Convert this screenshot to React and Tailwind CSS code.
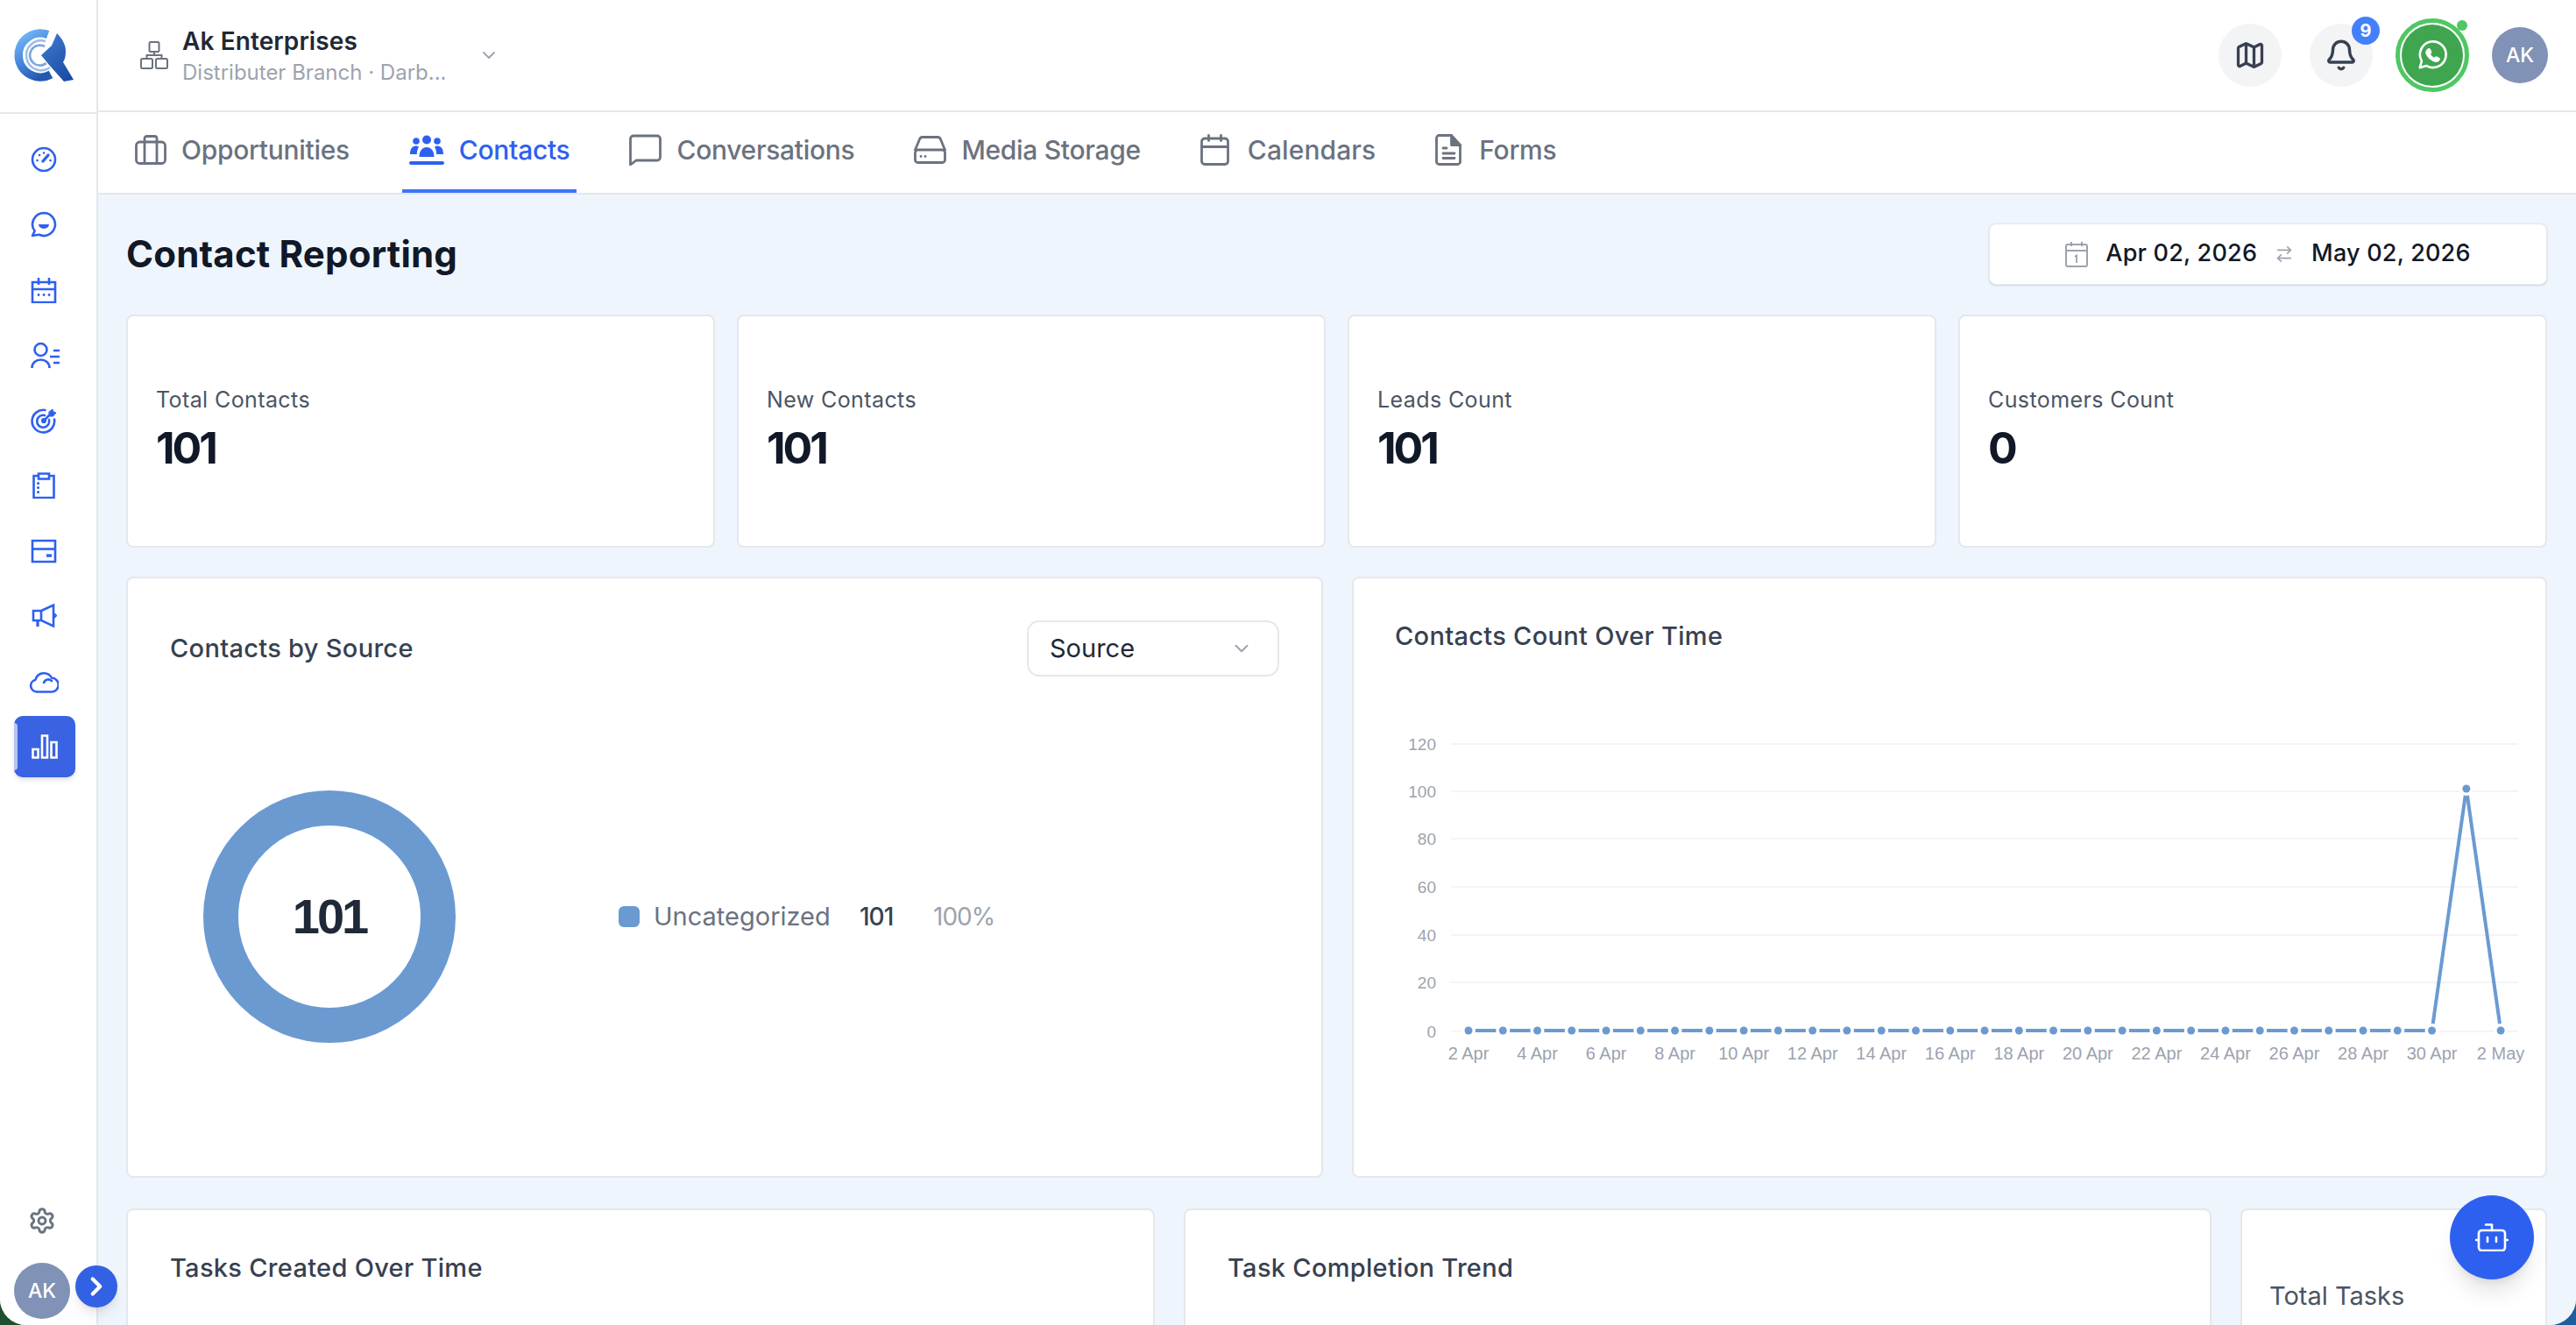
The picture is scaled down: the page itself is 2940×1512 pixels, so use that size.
import React from "react";
import { ChevronDown, ChevronRight, Map, Bell, Settings, ArrowRightLeft } from "lucide-react";

const font = "font-['Inter','Noto_Sans',sans-serif]";

function SideIcon({ children, box = "0 0 30 30", className = "w-[30px] h-[30px]" }) {
  return (
    <svg viewBox={box} className={className} fill="none" stroke="currentColor" strokeWidth="2.6" strokeLinecap="round" strokeLinejoin="round">
      {children}
    </svg>
  );
}

const sideIcons = [
  // gauge
  <SideIcon key="gauge">
    <circle cx="15" cy="15" r="13" />
    <path d="M14 17l6-7" strokeWidth="3.4" />
    <path d="M7.5 16h.1M10 10h.1M15 7.5h.1M22.5 16h.1" strokeWidth="2.6" />
  </SideIcon>,
  // chat
  <SideIcon key="chat">
    <path d="M15 2a13 13 0 1 1-5.5 24.8L2 28l2.6-5.4A13 13 0 0 1 15 2z" />
    <path d="M9 15h12a6 5 0 0 1-12 0z" fill="currentColor" stroke="none" />
  </SideIcon>,
  // calendar
  <SideIcon key="cal">
    <path d="M2 6h26v23H2z" strokeLinecap="butt" strokeLinejoin="miter" />
    <path d="M2 14h26M9 1v8M21 1v8" strokeLinecap="butt" />
    <path d="M9 20.5h.1M15 20.5h.1M21 20.5h.1" strokeWidth="2.8" />
  </SideIcon>,
  // person list
  <SideIcon key="person" box="0 0 33 31" className="w-[33px] h-[31px]">
    <circle cx="11.5" cy="9" r="7" />
    <path d="M1.5 30c0-6 4.5-9.5 10-9.5S21.5 24 21.5 30" strokeLinecap="butt" />
    <path d="M26 10h7M22 17h11M26 24h7" strokeLinecap="butt" />
  </SideIcon>,
  // target
  <SideIcon key="target">
    <path d="M16.5 3A12.8 12.8 0 1 0 27 13.5" />
    <path d="M16 9a7 7 0 1 0 5 5" />
    <circle cx="15" cy="15" r="1.8" fill="currentColor" />
    <path d="M15 15l7.5-7.5" />
    <path d="M21 5l4-3 1 3 3 1-3.5 4H22z" fill="currentColor" strokeWidth="1" />
  </SideIcon>,
  // clipboard
  <SideIcon key="clip">
    <path d="M9 4H3.5v25h23V4H21" strokeLinecap="butt" strokeLinejoin="miter" />
    <path d="M9 1.5h12v6H9z" strokeLinecap="butt" strokeLinejoin="miter" />
    <path d="M8.5 12.5h.1M8.5 17.5h.1M8.5 22.5h.1" strokeWidth="3" />
  </SideIcon>,
  // card
  <SideIcon key="card">
    <path d="M2 3h26v24H2z" strokeLinecap="butt" strokeLinejoin="miter" />
    <path d="M2 12.5h26" strokeLinecap="butt" />
    <path d="M18 20h6" strokeWidth="3.4" strokeLinecap="butt" />
  </SideIcon>,
  // megaphone
  <SideIcon key="mega">
    <path d="M3 9h9v11H3zM12 9l14-6.5v24L12 20z" strokeLinejoin="miter" />
    <path d="M27 12.5l2 2-2 2" strokeWidth="2.2" />
    <path d="M8 20v7" strokeWidth="3.2" strokeLinecap="butt" />
  </SideIcon>,
  // cloud
  <SideIcon key="cloud" box="0 0 34 30" className="w-[34px] h-[30px] -ml-[2px]">
    <path d="M9 27.5a7 7 0 0 1-1.5-13.8A10 10 0 0 1 26 11.5a8 8 0 0 1-.5 16z" />
    <path d="M17 17a5.5 5.5 0 0 1 9-2" />
  </SideIcon>,
];

function LogoMark() {
  return (
    <svg viewBox="0 0 84 80" className="w-[84px] h-[80px]" fill="none">
      <defs>
        <linearGradient id="logoRing" x1="0.2" y1="0" x2="0.7" y2="1">
          <stop offset="0" stopColor="#70b4f5" />
          <stop offset="0.5" stopColor="#4585dc" />
          <stop offset="1" stopColor="#2458b0" />
        </linearGradient>
        <linearGradient id="logoArrow" x1="0.2" y1="0" x2="0.8" y2="1">
          <stop offset="0" stopColor="#3d78cf" />
          <stop offset="1" stopColor="#1b4ba4" />
        </linearGradient>
      </defs>
      <path d="M44.6 15.5A25 25 0 1 0 48 61" stroke="url(#logoRing)" strokeWidth="9.5" />
      <path d="M42 23A17 17 0 1 0 47 53" stroke="#9dc0e8" strokeWidth="2.6" />
      <path d="M41 29A11.5 11.5 0 1 0 44 47" stroke="#7ea6da" strokeWidth="2.6" />
      <path d="M55 14C61 20 65 27 65 34C65 40 64 44 62 47L74 67L63 69L46 50L37 39L49 28Z" fill="url(#logoArrow)" stroke="#ffffff" strokeWidth="2.5" paintOrder="stroke" />
    </svg>
  );
}

function Tab({ icon, label, active, gap = "gap-[17px]", tracking = "tracking-[-0.3px]" }) {
  return (
    <div className={`flex items-center ${gap} h-full px-[8px] border-b-4 pb-[2px] ${active ? "border-[#3b76f6] text-[#2e60f0]" : "border-transparent text-[#6b7280]"}`}>
      {icon}
      <span className={`text-[30px] font-medium ${tracking}`}>{label}</span>
    </div>
  );
}

const tabIconCls = "fill-none stroke-current";

const tabs = [
  {
    label: "Opportunities",
    icon: (
      <svg viewBox="0 0 36 34" className={`w-[36px] h-[34px] ${tabIconCls}`} strokeWidth="2.8" strokeLinejoin="round">
        <rect x="1.5" y="8" width="33" height="24.5" rx="4" />
        <path d="M11 8V4a2.5 2.5 0 0 1 2.5-2.5h9A2.5 2.5 0 0 1 25 4v4M11 8v24.5M25 8v24.5" />
      </svg>
    ),
  },
  {
    label: "Contacts",
    active: true,
    icon: (
      <svg viewBox="0 0 40 36" className="w-[40px] h-[36px] fill-current">
        <circle cx="20" cy="6.5" r="5" />
        <circle cx="8" cy="8" r="3.8" />
        <circle cx="32" cy="8" r="3.8" />
        <path d="M11.5 26c0-7 3.5-11 8.5-11s8.5 4 8.5 11zM1 23c0-6 2.5-9.5 6.5-9.5 1.5 0 2.6.4 3.5 1.2C9.5 17 8.8 20 8.8 23zM39 23c0-6-2.5-9.5-6.5-9.5-1.5 0-2.6.4-3.5 1.2 1.5 2.3 2.2 5.3 2.2 8.3z" />
        <rect x="0" y="31" width="40" height="4" rx="2" />
      </svg>
    ),
  },
  {
    label: "Conversations",
    icon: (
      <svg viewBox="0 0 37 36" className={`w-[37px] h-[36px] ${tabIconCls}`} strokeWidth="2.8" strokeLinejoin="round">
        <path d="M5 2h27a3.5 3.5 0 0 1 3.5 3.5v21A3.5 3.5 0 0 1 32 30H8l-6.5 5V5.5A3.5 3.5 0 0 1 5 2z" />
      </svg>
    ),
  },
  {
    label: "Media Storage",
    icon: (
      <svg viewBox="0 0 37 32" className={`w-[37px] h-[32px] ${tabIconCls}`} strokeWidth="2.8" strokeLinejoin="round" strokeLinecap="round">
        <path d="M1.5 16L6.5 4a3.5 3.5 0 0 1 3.2-2.5h17.6A3.5 3.5 0 0 1 30.5 4l5 12" />
        <rect x="1.5" y="16" width="34" height="14.5" rx="3" />
        <path d="M8 23.5h.1M13 23.5h.1" />
      </svg>
    ),
  },
  {
    label: "Calendars",
    gap: "gap-[21px]",
    tracking: "tracking-[0.1px]",
    icon: (
      <svg viewBox="0 0 33 36" className={`w-[33px] h-[36px] ${tabIconCls}`} strokeWidth="2.8" strokeLinejoin="round" strokeLinecap="round">
        <rect x="1.5" y="5" width="30" height="29.5" rx="3.5" />
        <path d="M1.5 14.5h30M9.5 1.5v6M23.5 1.5v6" />
      </svg>
    ),
  },
  {
    label: "Forms",
    gap: "gap-[20px]",
    icon: (
      <svg viewBox="0 0 30 36" className={`w-[30px] h-[36px] ${tabIconCls}`} strokeWidth="2.8" strokeLinejoin="round" strokeLinecap="round">
        <path d="M4.5 1.5h14l10 11v19a3 3 0 0 1-3 3h-21a3 3 0 0 1-3-3v-27a3 3 0 0 1 3-3z" />
        <path d="M18.5 1.5v11h10" fill="currentColor" />
        <path d="M9 16h4M9 22h13M9 27.5h13" />
      </svg>
    ),
  },
];

function Card({ className = "", children }) {
  return <div className={`bg-white border-2 border-[#e5e7eb] rounded-[8px] ${className}`}>{children}</div>;
}

function StatCard({ label, value }) {
  return (
    <Card className="h-[266px] pl-[32px] flex flex-col justify-center pb-[4px]">
      <div className="text-[25px] leading-[32px] text-[#4b5563] tracking-[0.4px]">{label}</div>
      <div className="mt-[10px] text-[50px] leading-[58px] font-bold text-[#111827] tracking-[-3px]">{value}</div>
    </Card>
  );
}

const stats = [
  ["Total Contacts", "101"],
  ["New Contacts", "101"],
  ["Leads Count", "101"],
  ["Customers Count", "0"],
];

// chart geometry, in page pixels relative to the svg's own corner
const chartX = (i) => 131 + i * 39.27;
const zeroY = 416;
const valueY = (v) => zeroY - v * (276 / 101);

const values = Array.from({ length: 31 }, (_, i) => (i === 29 ? 101 : 0));
const gridRows = [
  ["120", 89],
  ["100", 143],
  ["80", 197],
  ["60", 252],
  ["40", 307],
  ["20", 361],
  ["0", 417],
];
const dayLabels = Array.from({ length: 15 }, (_, i) => `${2 + i * 2} Apr`).concat(["2 May"]);

function LineChart() {
  return (
    <svg viewBox="0 0 1360 500" className="w-[1360px] h-[500px] block">
      {gridRows.map(([label, y]) => (
        <g key={label}>
          <line x1="111" x2="1329" y1={y} y2={y} stroke="#f3f4f6" strokeWidth="2" />
          <text x="94" y={y + 7} textAnchor="end" fontSize="19" fill="#9ca3af" fontFamily="Liberation Sans, sans-serif">{label}</text>
        </g>
      ))}
      {values.slice(0, -1).map((v, i) => (
        <line key={i} x1={chartX(i)} y1={valueY(v)} x2={chartX(i + 1)} y2={valueY(values[i + 1])} stroke="#6b9ad1" strokeWidth="4" />
      ))}
      {values.map((v, i) => (
        <circle key={i} cx={chartX(i)} cy={valueY(v)} r="4.5" fill="#6b9ad1" stroke="#ffffff" strokeWidth="7" paintOrder="stroke" />
      ))}
      {dayLabels.map((label, i) => (
        <text key={label} x={i === 15 ? chartX(30) : chartX(i * 2)} y="449" textAnchor="middle" fontSize="20" fill="#9ca3af" fontFamily="Liberation Sans, sans-serif">{label}</text>
      ))}
    </svg>
  );
}

const cardTitle = "text-[29px] leading-[40px] font-medium text-[#374151] tracking-[0.3px]";

export default function App() {
  return (
    <div className={`${font} w-[2940px] h-[1512px] overflow-hidden bg-[linear-gradient(90deg,#1f5130_0%,#1f5130_50%,#1f5d9f_50%,#1f5d9f_100%)]`}>
      <div className="relative w-full h-full overflow-hidden flex rounded-b-[30px] bg-white">
        {/* Sidebar */}
        <aside className="w-[112px] shrink-0 border-r-2 border-[#e5e7eb] bg-white flex flex-col">
          <div className="h-[130px] shrink-0 border-b-2 border-[#e5e7eb] flex items-center justify-center pr-[6px]">
            <LogoMark />
          </div>
          <nav className="flex flex-col items-start pt-[37px] pl-[35px] gap-[44.25px] text-[#2e60f0]">
            {sideIcons.map((icon) => icon)}
          </nav>
          <div className="relative mx-[16px] mt-[25px] w-[70px] h-[70px] rounded-[10px] bg-[#3a63e3] shadow-md flex items-center justify-center text-white">
            <span className="absolute left-0 top-[8px] bottom-[8px] w-[4px] rounded-r-sm bg-[#b4c4f2]" />
            <svg viewBox="0 0 30 28" className="w-[30px] h-[28px]" fill="none" stroke="currentColor" strokeWidth="2.6">
              <path d="M1.5 17h6v9.5h-6zM12 1.5h6v25h-6zM22.5 9h6v17.5h-6z" />
            </svg>
          </div>
          <div className="mt-auto pb-[7px]">
            <div className="flex justify-center pr-[14px] mb-[32px] text-[#6b7280]">
              <Settings className="w-[32px] h-[32px]" strokeWidth={2.2} />
            </div>
            <div className="relative ml-[16px] w-[64px] h-[64px] rounded-full bg-[#8092b5] text-white text-[23px] font-medium flex items-center justify-center">
              AK
              <div className="absolute left-[70px] top-[3px] w-[48px] h-[48px] rounded-full bg-[#3361e4] shadow-lg flex items-center justify-center z-10">
                <ChevronRight className="w-[34px] h-[34px]" strokeWidth={3} />
              </div>
            </div>
          </div>
        </aside>

        <div className="flex-1 min-w-0 flex flex-col bg-[#eff5fd]">
          {/* Header */}
          <header className="h-[128px] shrink-0 bg-white border-b-2 border-[#e5e7eb] flex items-center pl-[48px] pr-[32px]">
            <svg viewBox="0 0 32 32" className="w-[32px] h-[32px] text-[#6b7280]" fill="none" stroke="currentColor" strokeWidth="2">
              <rect x="10.5" y="1" width="11" height="11" rx="1.5" />
              <rect x="1" y="20" width="13" height="11" rx="1.5" />
              <rect x="18" y="20" width="13" height="11" rx="1.5" />
              <path d="M16 12v4M7.5 20v-4h17v4" />
            </svg>
            <div className="ml-[16px] w-[304px] pt-[3px]">
              <div className="text-[28px] leading-[36px] font-semibold text-[#1f2937] tracking-[0.1px]">Ak Enterprises</div>
              <div className="text-[24px] leading-[36px] text-[#9ca3af] whitespace-nowrap">Distributer Branch · Darb...</div>
            </div>
            <ChevronDown className="ml-[34px] w-[24px] h-[24px] text-[#9ca3af]" strokeWidth={1.8} />
            <div className="ml-auto flex items-center">
              <div className="w-[72px] h-[72px] rounded-full bg-[#f3f4f6] flex items-center justify-center text-[#374151]">
                <Map className="w-[36px] h-[36px]" strokeWidth={2.2} />
              </div>
              <div className="relative ml-[32px] w-[72px] h-[72px] rounded-full bg-[#f3f4f6] flex items-center justify-center text-[#374151]">
                <Bell className="w-[38px] h-[38px]" strokeWidth={2.2} />
                <span className="absolute left-[48px] top-[-8px] w-[32px] h-[32px] rounded-full bg-[#4480fb] text-white text-[20px] font-bold flex items-center justify-center">9</span>
              </div>
              <div className="relative ml-[26px] w-[84px] h-[84px] rounded-full bg-white border-[5px] border-[#4fc764] p-[2px]">
                <div className="w-full h-full rounded-full bg-[#3fa64f] flex items-center justify-center text-white">
                  <svg viewBox="0 0 32 32" className="w-[38px] h-[38px]" fill="none" stroke="currentColor">
                    <path d="M4 28l1.8-6.5A12.5 12.5 0 1 1 10.5 26.2z" strokeWidth="2.2" strokeLinejoin="round" />
                    <path d="M11.5 10.5c1-1 2-.8 2.5.3l.8 1.9c.2.5 0 1-.4 1.4l-.8.9c.9 1.7 2.5 3.2 4.3 4l.9-1c.4-.4.9-.5 1.4-.3l1.9.9c1 .5 1.1 1.5.3 2.4-1.1 1.3-3 1.5-5 .6-3.5-1.5-6-4-7.2-7-.7-1.7-.3-2.9 1.8-4.1z" fill="currentColor" />
                  </svg>
                </div>
                <span className="absolute right-[-3px] top-[-3px] w-[12px] h-[12px] rounded-full bg-[#4fc764]" />
              </div>
              <div className="ml-[26px] w-[64px] h-[64px] rounded-full bg-[#8092b5] text-white text-[23px] font-medium flex items-center justify-center">AK</div>
            </div>
          </header>

          {/* Tabs */}
          <div className="h-[94px] shrink-0 bg-white border-b-2 border-[#e5e7eb] flex items-center pl-[34px] gap-[52px]">
            {tabs.map((t) => (
              <Tab key={t.label} {...t} />
            ))}
          </div>

          {/* Content */}
          <main className="flex-1 min-h-0 overflow-hidden pl-[32px] pr-[33px] pt-[33px]">
            <div className="flex items-center justify-between h-[69px]">
              <h1 className="text-[42px] font-bold text-[#111827] tracking-[0.2px]">Contact Reporting</h1>
              <div className="w-[637px] h-[70px] bg-white rounded-[8px] border border-[#e5e7eb] shadow-sm flex items-center justify-center gap-[20px] text-[27px] font-medium text-[#111827] tracking-[0.2px]">
                <svg viewBox="0 0 26 30" className="w-[26px] h-[30px] text-[#9ca3af]" fill="none" stroke="currentColor" strokeWidth="2">
                  <rect x="1" y="4" width="24" height="25" rx="2" />
                  <path d="M1 11h24M7 1v5M19 1v5" />
                  <path d="M11 18l2-1.5V25" strokeWidth="1.8" />
                </svg>
                <span>Apr 02, 2026</span>
                <ArrowRightLeft className="w-[22px] h-[22px] text-[#9ca3af]" strokeWidth={1.8} />
                <span>May 02, 2026</span>
              </div>
            </div>

            <div className="grid grid-cols-4 gap-[25px] mt-[35px]">
              {stats.map(([label, value]) => (
                <StatCard key={label} label={label} value={value} />
              ))}
            </div>

            <div className="grid grid-cols-[1366px_1fr] gap-[33px] mt-[33px]">
              <Card className="h-[686px] relative px-[48px] pt-[48px]">
                <div className="flex items-center justify-between">
                  <h2 className={cardTitle}>Contacts by Source</h2>
                  <div className="w-[288px] h-[64px] border-2 border-[#e5e7eb] rounded-[14px] flex items-center justify-between pl-[24px] pr-[28px] text-[29px] text-[#1f2937]">
                    Source
                    <ChevronDown className="w-[26px] h-[26px] text-[#9ca3af]" strokeWidth={1.8} />
                  </div>
                </div>
                <div className="flex items-center mt-[130px] pl-[38px]">
                  <div className="w-[288px] h-[288px] rounded-full border-[40px] border-[#6b9ad1] flex items-center justify-center font-['Liberation_Sans',sans-serif] font-bold text-[56px] tracking-[-3px] text-[#1f2937]">
                    101
                  </div>
                  <div className="flex items-center ml-[186px] text-[28px]">
                    <span className="w-[24px] h-[24px] rounded-[6px] bg-[#6b9ad1]" />
                    <span className="ml-[16px] w-[235px] text-[29px] text-[#6b7280]">Uncategorized</span>
                    <span className="w-[84px] font-medium text-[#374151] tracking-[-1px]">101</span>
                    <span className="text-[#9ca3af] tracking-[-1px]">100%</span>
                  </div>
                </div>
              </Card>
              <Card className="h-[686px] pt-[46px]">
                <h2 className={`pl-[47px] ${cardTitle}`}>Contacts Count Over Time</h2>
                <div className="mt-[14px]">
                  <LineChart />
                </div>
              </Card>
            </div>

            <div className="grid grid-cols-[1174px_1173px_350px] gap-[33px] mt-[35px]">
              <Card className="h-[300px] pl-[48px] pt-[46px]">
                <h2 className={cardTitle}>Tasks Created Over Time</h2>
              </Card>
              <Card className="h-[300px] pl-[48px] pt-[46px]">
                <h2 className={cardTitle}>Task Completion Trend</h2>
              </Card>
              <Card className="h-[300px] pl-[31px] pt-[80px]">
                <div className="text-[29px] leading-[36px] text-[#4b5563]">Total Tasks</div>
              </Card>
            </div>
          </main>
        </div>

        {/* Floating assistant button */}
        <div className="absolute left-[2796px] top-[1364px] w-[96px] h-[96px] rounded-full bg-[#2e60f0] shadow-xl flex items-center justify-center text-white">
          <svg viewBox="0 0 38 32" className="w-[38px] h-[32px]" fill="none" stroke="currentColor" strokeWidth="2.6" strokeLinecap="round" strokeLinejoin="round">
            <rect x="4" y="8" width="30" height="23" rx="3.5" />
            <path d="M19 8V1.5h-7M1 19h3M34 19h3M14 16v5M24 16v5" />
          </svg>
        </div>
      </div>
    </div>
  );
}
